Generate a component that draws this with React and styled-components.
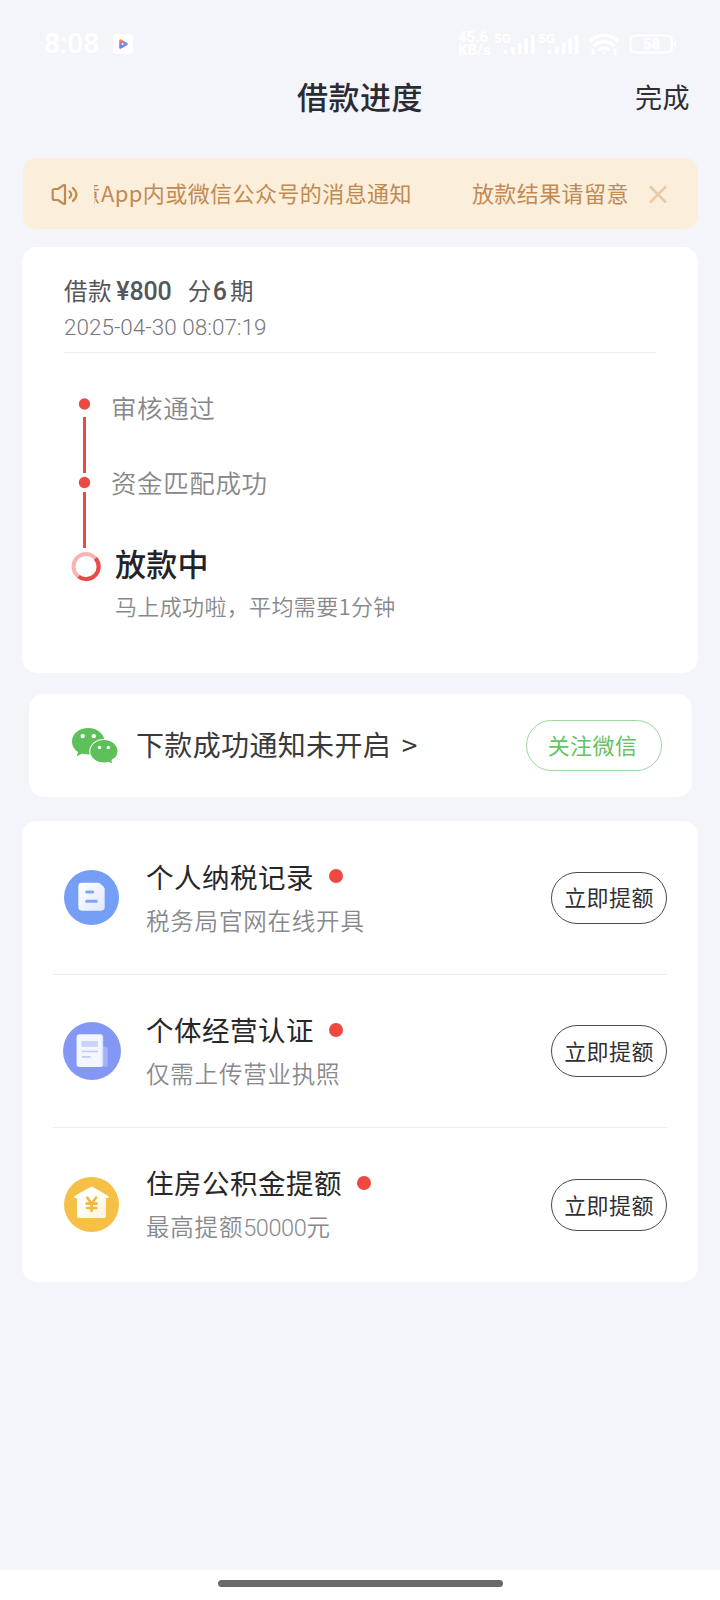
import styled, { createGlobalStyle } from "styled-components"

const GlobalStyle = createGlobalStyle`
  body {
    margin: 0;
    background: #f4f5fa;
    font-family: "Noto Sans CJK SC", sans-serif;
  }
`

const Pagina = styled.div`
  width: 720px;
  height: 1600px;
  display: flex;
  flex-direction: column;
  overflow: hidden;
  background: #f4f5fa;
`

const StatusBar = styled.div`
  height: 70px;
  box-sizing: border-box;
  padding: 18px 43px 0 44px;
  display: flex;
  align-items: center;
  color: #fff;
  font-family: Roboto, sans-serif;
`

const Hora = styled.div`
  font-size: 28px;
  font-weight: 500;
  line-height: 52px;
  width: 69px;
`

const Espaco = styled.div`
  flex: 1;
`

const Velocidade = styled.div`
  width: 36px;
  font-size: 15px;
  font-weight: 700;
  line-height: 13px;
`

const Cabecalho = styled.header`
  height: 52px;
  margin-bottom: 35.5px;
  padding: 0 30px;
  display: grid;
  grid-template-columns: 1fr auto 1fr;
  align-items: center;
`

const Titulo = styled.h1`
  grid-column: 2;
  margin: 0;
  font-size: 31px;
  font-weight: 500;
  line-height: 50px;
  letter-spacing: 0.5px;
  color: #2b2b33;
`

const Concluir = styled.div`
  justify-self: end;
  padding-top: 2px;
  font-size: 27px;
  line-height: 50px;
  letter-spacing: 0.5px;
  color: #2e2e33;
`

const Aviso = styled.div`
  height: 71px;
  box-sizing: border-box;
  margin: 0 22px 18.5px 23px;
  padding: 2px 31px 0 28px;
  border-radius: 13px;
  background: #fbeedb;
  display: flex;
  align-items: center;
`

const Letreiro = styled.div`
  flex: 0 0 535px;
  margin: -4px 20px 0 15px;
  overflow: hidden;
  display: flex;
  gap: 60px;
  white-space: nowrap;
  font-size: 22px;
  line-height: 40px;
  letter-spacing: 0.42px;
  color: #c18a52;

  span:first-child {
    margin-left: -150px;
  }
`

const Card = styled.section`
  box-sizing: border-box;
  height: ${(p) => p.$altura}px;
  margin: 0 ${(p) => p.$margem || 22}px;
  padding: 0 ${(p) => p.$recuo}px;
  border-radius: 15px;
  background: #fff;
`

const CardWechat = styled(Card)`
  margin-top: 21px;
  margin-bottom: 24px;
`

const Resumo = styled.div`
  height: 106px;
  box-sizing: border-box;
  padding-top: 25px;
  border-bottom: 1px solid #eeeeef;
`

const Valor = styled.div`
  display: flex;
  align-items: baseline;
  height: 37px;
  line-height: 36px;
  font-size: 23.5px;
  letter-spacing: 0.6px;
  color: #55565a;

  b {
    font-family: Roboto, sans-serif;
    font-size: 25px;
    font-weight: 500;
    letter-spacing: -0.1px;
  }

  b:first-of-type {
    margin: 0 16px 0 4px;
  }

  b:last-of-type {
    margin: 0 3px 0 1px;
  }
`

const DataHora = styled.div`
  font-family: Roboto, sans-serif;
  font-size: 22.5px;
  font-weight: 300;
  line-height: 36px;
  color: #77787c;
`

const Progresso = styled.div`
  display: flex;
  padding-top: 44px;
`

const Trilho = styled.svg`
  flex: none;
  width: 47px;
  height: 190px;
`

const Etapas = styled.div`
  display: flex;
  flex-direction: column;
  margin-top: -3px;
`

const Etapa = styled.div`
  height: 75px;
  font-size: 25.5px;
  font-weight: 350;
  line-height: 26px;
  letter-spacing: 0.6px;
  color: #868789;
`

const EtapaAtual = styled.div`
  padding-left: 4px;
  margin-top: 2px;
  font-size: 31px;
  line-height: 34px;
  font-weight: 500;
  letter-spacing: 0.3px;
  color: #222326;
`

const EtapaDetalhe = styled.div`
  padding-left: 4px;
  margin-top: 9px;
  font-size: 22px;
  font-weight: 350;
  line-height: 32px;
  letter-spacing: 0.35px;
  color: #88898c;
`

const Wechat = styled.div`
  height: 100%;
  display: flex;
  align-items: center;
  padding: 0 0 0 14px;
`

const WechatTexto = styled.div`
  flex: 1;
  margin: -4px 0 0 18px;
  font-size: 28px;
  line-height: 44px;
  letter-spacing: 0.35px;
  word-spacing: 4px;
  color: #3a3a3d;
`

const Botao = styled.button`
  box-sizing: border-box;
  width: ${(p) => p.$largura}px;
  height: ${(p) => p.$altura}px;
  padding: 0 ${(p) => p.$recuo || 0}px 3px 0;
  border: 1px solid ${(p) => p.$borda};
  border-radius: 26px;
  background: #fff;
  color: ${(p) => p.$cor};
  font-family: inherit;
  font-size: 22px;
  line-height: 40px;
  letter-spacing: 0.4px;
`

const Linha = styled.div`
  box-sizing: border-box;
  height: 153.5px;
  padding-left: 9px;
  display: flex;
  align-items: center;
  border-bottom: ${(p) => (p.$ultima ? "0" : "1px solid #eeeeef")};

  ${Botao} {
    margin-top: 1px;
  }
`

const Icone = styled.svg`
  flex: none;
  width: ${(p) => p.$tam}px;
  height: ${(p) => p.$tam}px;
  margin: 0 ${(p) => (59 - p.$tam) / 2}px;
`

const LinhaTextos = styled.div`
  flex: 1;
  margin: -1px 0 0 25px;
`

const LinhaTitulo = styled.div`
  display: flex;
  align-items: center;
  gap: 15px;
  font-size: 27.5px;
  line-height: 40px;
  letter-spacing: 0.5px;
  color: #27272a;
`

const Ponto = styled.i`
  width: 14px;
  height: 14px;
  margin-top: 1px;
  border-radius: 50%;
  background: #ee4840;
`

const LinhaDetalhe = styled.div`
  margin-top: 6px;
  font-size: 23.5px;
  font-weight: 350;
  line-height: 36px;
  letter-spacing: 0.8px;
  color: #88898c;
`

const Numero = styled.span`
  font-family: Roboto, sans-serif;
  font-weight: 300;
  letter-spacing: -0.4px;
`

const Rodape = styled.div`
  height: 30.5px;
  margin-top: auto;
  background: #fff;
  display: flex;
  justify-content: center;
  align-items: flex-start;
`

const BarraInicio = styled.div`
  width: 285px;
  height: 7px;
  margin-top: 10.5px;
  border-radius: 4px;
  background: #6a6a6a;
`

const IconePlayer = () => (
  <svg width="20" height="20" viewBox="0 0 20 20">
    <defs>
      <linearGradient id="play" x1="0" y1="0" x2="0.4" y2="1">
        <stop offset="0" stopColor="#f08a3c" />
        <stop offset="0.45" stopColor="#b86ad0" />
        <stop offset="0.75" stopColor="#4f9df0" />
        <stop offset="1" stopColor="#a04df0" />
      </linearGradient>
    </defs>
    <rect width="20" height="20" rx="4" fill="#fff" />
    <path d="M7.500 6.500v7l6-3.500z" fill="none" stroke="url(#play)" strokeWidth="2.600" strokeLinejoin="round" />
  </svg>
)

const Sinal = ({ largura }) => (
  <svg width={largura} height="26" viewBox={`0 0 ${largura} 26`} fill="#fff">
    <text x="0" y="12" fontSize="13.500" fontWeight="700">5G</text>
    <rect x="10" y="19" width="3" height="4" rx="1" />
    <rect x="17" y="16" width="3.500" height="7" rx="1" />
    <rect x="24" y="12" width="3.500" height="11" rx="1" />
    <rect x="30.500" y="8" width="3.500" height="15" rx="1" />
    <rect x="37" y="4" width="3.500" height="19" rx="1" />
  </svg>
)

const Wifi = () => (
  <svg width="32" height="24" viewBox="0 0 32 24" fill="none" stroke="#fff" strokeWidth="3.400">
    <path d="M1.500 9.500Q16-3 30.500 9.500" />
    <path d="M6 14Q16 5 26 14" />
    <path d="M10.500 18.500Q16 13.500 21.500 18.500" />
    <circle cx="16" cy="20.500" r="1.200" fill="#fff" stroke="none" />
    <path d="M5 17v6M3 20.500l2 2 2-2M27 23v-6M25 19l2-2 2 2" strokeWidth="1.500" />
  </svg>
)

const Bateria = () => (
  <svg width="48" height="20" viewBox="0 0 48 20" fill="none" stroke="#fff" strokeWidth="2.200">
    <rect x="1.500" y="1.500" width="41.500" height="17" rx="5" />
    <path d="M46 7.500v5" strokeWidth="2.500" />
    <text x="22.500" y="15" textAnchor="middle" fontSize="15" fontWeight="700" fill="#fff" stroke="none">58</text>
  </svg>
)

const AltoFalante = () => (
  <svg width="28" height="24" viewBox="0 0 28 24" fill="none" stroke="#c18a52" strokeWidth="2.200" strokeLinejoin="round" strokeLinecap="round">
    <path d="M3.500 7H7l5.500-3.800q1.500-.7 1.500.8v17q0 1.500-1.500.8L7 18H3.500q-1.800 0-1.800-1.800V8.800Q1.700 7 3.500 7z" />
    <path d="M18.500 9.300q3.600 3.200 0 6.400" />
    <path d="M21.900 6q7 6.500 0 13" />
  </svg>
)

const Fechar = () => (
  <svg width="18" height="18" viewBox="0 0 18 18" stroke="#e7cba8" strokeWidth="2.600">
    <path d="M1 1.500l16 16M17 1.500L1 17.500" />
  </svg>
)

const LogoWechat = () => (
  <svg width="46" height="36" viewBox="0 0 137 107">
    <path
      d="M48 0C21 0 0 17.500 0 40c0 13 7 24 18 31l-4 13 17-8c5 2 11 3 18 3 27 0 48-17 48-39S75 0 48 0z"
      fill="#5dc05a"
    />
    <path
      d="M95 34c-23 0-42 15-42 35s19 35 42 35c5 0 10-.7 14-2l13 6-3-12c11-6 18-16 18-27 0-20-19-35-42-35z"
      fill="#5dc05a"
      stroke="#fff"
      strokeWidth="3"
    />
    <g fill="#fff">
      <circle cx="32" cy="24" r="6.500" />
      <circle cx="65" cy="24" r="6.500" />
      <circle cx="82" cy="58" r="5" />
      <circle cx="108" cy="58" r="5" />
    </g>
  </svg>
)

const IconeImposto = () => (
  <Icone $tam={55} viewBox="0 0 165 165">
    <defs>
      <linearGradient id="papel" x1="0" y1="0" x2="1" y2="1">
        <stop offset="0" stopColor="#fff" />
        <stop offset="1" stopColor="#dfe9fd" />
      </linearGradient>
    </defs>
    <circle cx="82.500" cy="82.500" r="82.500" fill="#759ef7" />
    <path d="M53 38h48q5 0 9 4l9 8q3 3 3 8v54q0 10-10 10H53q-10 0-10-10V48q0-10 10-10z" fill="url(#papel)" />
    <path d="M68 66h18M68 94h29" stroke="#7fa5f6" strokeWidth="9" strokeLinecap="round" />
  </Icone>
)

const IconeEmpresa = () => (
  <Icone $tam={58} viewBox="0 0 175 175">
    <circle cx="87.500" cy="87.500" r="87.500" fill="#8397f5" />
    <path d="M108 75h20q7 0 7 7v46q0 7-7 7h-20z" fill="#a3b2f9" />
    <rect x="41" y="37" width="80" height="99" rx="9" fill="#f3f6ff" />
    <path d="M112 38q9 0 9 9v80q0 9-9 9 5-3 5-9V47q0-6-5-9z" fill="#d8e0fd" />
    <rect x="56" y="57" width="49" height="18" fill="#c9d4f9" />
    <path d="M57 89h48M57 105h26" stroke="#bccaf8" strokeWidth="5" />
  </Icone>
)

const IconeCasa = () => (
  <Icone $tam={55} viewBox="0 0 165 165">
    <defs>
      <linearGradient id="casa" x1="0" y1="0" x2="1" y2="1">
        <stop offset="0.400" stopColor="#fff" />
        <stop offset="1" stopColor="#fdf1d4" />
      </linearGradient>
    </defs>
    <circle cx="82.500" cy="82.500" r="82.500" fill="#f5c045" />
    <path d="M78 31q5-3 10 0l45 26q4 5-1 6h-6v54q0 6-6 6H45q-6 0-6-6V63h-6q-5-1-1-6z" fill="url(#casa)" />
    <g fill="none" stroke="#f2b83c" strokeWidth="8" strokeLinecap="round">
      <path d="M70 62l13 18 13-18M83 80v22M68 80h30M69 93h28" />
    </g>
  </Icone>
)

const itens = [
  { titulo: "个人纳税记录", detalhe: "税务局官网在线开具", Figura: IconeImposto },
  { titulo: "个体经营认证", detalhe: "仅需上传营业执照", Figura: IconeEmpresa },
  { titulo: "住房公积金提额", detalhe: <>最高提额<Numero>50000</Numero>元</>, Figura: IconeCasa },
]

const App = () => {
  return (
    <Pagina>
      <GlobalStyle />

      <StatusBar>
        <Hora>8:08</Hora>
        <IconePlayer />
        <Espaco />
        <Velocidade>45.6 KB/s</Velocidade>
        <Sinal largura={44} />
        <Sinal largura={50} />
        <Wifi />
        <Espaco style={{ flex: "0 0 9px" }} />
        <Bateria />
      </StatusBar>

      <Cabecalho>
        <Titulo>借款进度</Titulo>
        <Concluir>完成</Concluir>
      </Cabecalho>

      <Aviso>
        <AltoFalante />
        <Letreiro>
          <span>放款结果请留意App内或微信公众号的消息通知</span>
          <span>放款结果请留意</span>
        </Letreiro>
        <Fechar />
      </Aviso>

      <Card $altura={426} $recuo={42}>
        <Resumo>
          <Valor>
            借款<b>¥800</b>分<b>6</b>期
          </Valor>
          <DataHora>2025-04-30 08:07:19</DataHora>
        </Resumo>
        <Progresso>
          <Trilho viewBox="0 0 47 190">
            <g fill="#ea4a43">
              <circle cx="20.500" cy="7" r="5.700" />
              <rect x="19" y="20" width="3" height="56" />
              <circle cx="20.500" cy="85.500" r="5.700" />
              <rect x="19" y="95" width="3" height="56" />
            </g>
            <circle cx="22" cy="169.500" r="12.500" fill="none" stroke="#f6b5b3" strokeWidth="4" />
            <path d="M31.500 161.300A12.500 12.500 0 0 1 14.500 179.500" fill="none" stroke="#ea4a47" strokeWidth="4" />
          </Trilho>
          <Etapas>
            <Etapa>审核通过</Etapa>
            <Etapa>资金匹配成功</Etapa>
            <EtapaAtual>放款中</EtapaAtual>
            <EtapaDetalhe>马上成功啦，平均需要1分钟</EtapaDetalhe>
          </Etapas>
        </Progresso>
      </Card>

      <CardWechat $altura={103} $margem={28.5} $recuo={29.5}>
        <Wechat>
          <LogoWechat />
          <WechatTexto>下款成功通知未开启 &gt;</WechatTexto>
          <Botao $largura={136} $altura={51} $recuo={3} $borda="#9ad99a" $cor="#62c462">关注微信</Botao>
        </Wechat>
      </CardWechat>

      <Card $altura={460.5} $recuo={31}>
        {itens.map(({ titulo, detalhe, Figura }, i) => (
          <Linha key={titulo} $ultima={i === itens.length - 1}>
            <Figura />
            <LinhaTextos>
              <LinhaTitulo>
                {titulo}
                <Ponto />
              </LinhaTitulo>
              <LinhaDetalhe>{detalhe}</LinhaDetalhe>
            </LinhaTextos>
            <Botao $largura={116} $altura={52} $borda="#4a4a4d" $cor="#303033">立即提额</Botao>
          </Linha>
        ))}
      </Card>

      <Rodape>
        <BarraInicio />
      </Rodape>
    </Pagina>
  )
}

export default App
